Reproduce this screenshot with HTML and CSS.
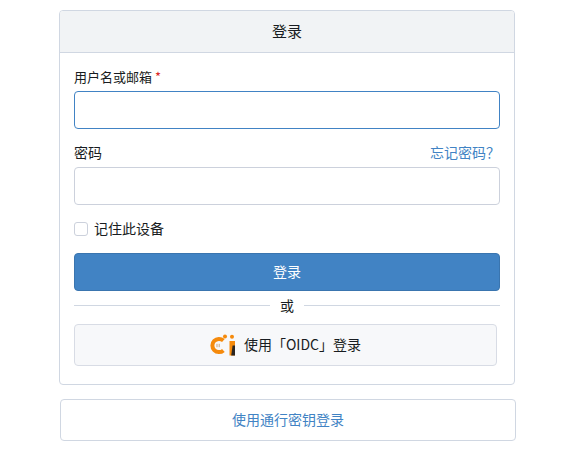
FILE: index.html
```html
<!DOCTYPE html>
<html lang="zh-CN">
<head>
<meta charset="utf-8">
<title>登录</title>
<link rel="stylesheet" href="styles.css">
</head>
<body>
<main class="page">
  <section class="card">
    <h4 class="card-head">登录</h4>
    <form class="card-body">
      <div class="field">
        <label class="label" for="u">用户名或邮箱<span class="req">*</span></label>
        <input id="u" class="input focus" type="text">
      </div>
      <div class="field">
        <div class="label-row">
          <label class="label" for="p">密码</label>
          <a class="link" href="#">忘记密码？</a>
        </div>
        <input id="p" class="input" type="password">
      </div>
      <label class="check"><span class="box"></span><span class="check-text">记住此设备</span></label>
      <button class="primary" type="button"><span class="lift">登录</span></button>
      <div class="divider"><span>或</span></div>
      <button class="oauth" type="button">
        <svg class="logo" viewBox="0 0 25 22" width="25" height="22" aria-hidden="true">
          <path d="M13.4 6.6A6.6 6.6 0 1 0 13.4 16.4" fill="none" stroke="#f58a0c" stroke-width="4"/>
          <path d="M7 9.8v3.4M9.2 9.8v3.4" stroke="#c9a27a" stroke-width="1"/>
          <circle cx="15" cy="2.6" r="2" fill="#f58a0c"/>
          <circle cx="22" cy="2.8" r="2" fill="#f58a0c"/>
          <path d="M19.5 7h5.5v14.5h-5.5z" fill="#f58a0c"/>
          <path d="M25 11.5v10h-3.8l1.4-10z" fill="#2b2520"/>
        </svg>
        <span class="lift">使用「OIDC」登录</span>
      </button>
    </form>
  </section>
  <a class="passkey" href="#"><span class="lift">使用通行密钥登录</span></a>
</main>
</body>
</html>
```
FILE: styles.css
```css
* { box-sizing: border-box; }
html, body { margin: 0; padding: 0; background: #fff; }
body {
  font-family: "Noto Sans CJK SC", "Liberation Sans", sans-serif;
  font-size: 14px;
  color: #181c21;
}
.page {
  width: 568px;
  height: 462px;
  padding: 10px 0 0 59px;
  overflow: hidden;
}
.card {
  width: 456px;
  height: 375px;
  border: 1px solid #d0d7e2;
  border-radius: 4px;
  overflow: hidden;
}
.card-head {
  margin: 0;
  height: 42px;
  padding-bottom: 2px;
  background: #f1f3f5;
  border-bottom: 1px solid #d0d7e2;
  display: flex;
  align-items: center;
  justify-content: center;
  font-size: 15px;
  font-weight: 400;
}
.card-body {
  display: flex;
  flex-direction: column;
  padding: 12px 14px 0;
}
.field { display: flex; flex-direction: column; }
.field + .field { margin-top: 12px; }
.label { font-size: 13px; line-height: 23px; height: 26px; }
.label-row .label { font-size: 14px; }
.req { color: #db2828; margin-left: 3px; }
.label-row { display: flex; justify-content: space-between; align-items: flex-start; height: 26px; }
.link { color: #4183c4; text-decoration: none; font-size: 14px; line-height: 23px; }
.input {
  display: block;
  width: 426px;
  height: 38px;
  border: 1px solid #ccd1dc;
  border-radius: 4px;
  background: #fff;
  outline: none;
}
.input.focus { border-color: #4183c4; }
.check {
  display: flex;
  align-items: center;
  gap: 6px;
  margin-top: 14px;
  height: 20px;
}
.check-text { line-height: 18px; height: 20px; }
.box {
  width: 14px;
  height: 14px;
  border: 1px solid #ccd1dc;
  border-radius: 3px;
  background: #fff;
}
.primary {
  margin-top: 14px;
  width: 426px;
  height: 38px;
  background: #4183c4;
  border: 1px solid #3a75af;
  border-radius: 4px;
  color: #fff;
  font: inherit;
}
.lift { display: block; margin-top: -2px; }
.divider {
  display: flex;
  align-items: center;
  gap: 10px;
  height: 29px;
  margin-bottom: 4px;
  width: 426px;
}
.divider::before, .divider::after {
  content: "";
  height: 1px;
  flex: 1;
  background: #d0d7e2;
}
.divider span { width: 14px; text-align: center; line-height: 1; margin-top: -1px; }
.oauth {
  width: 423px;
  height: 42px;
  background: #f7f8fa;
  border: 1px solid #d8dce5;
  border-radius: 4px;
  font: inherit;
  color: #181c21;
  display: flex;
  align-items: center;
  justify-content: center;
  gap: 9px;
}
.logo { display: block; }
.passkey {
  display: flex;
  align-items: center;
  justify-content: center;
  width: 456px;
  height: 42px;
  margin: 14px 0 0 1px;
  border: 1px solid #d0d7e2;
  border-radius: 4px;
  color: #4183c4;
  text-decoration: none;
}
```
